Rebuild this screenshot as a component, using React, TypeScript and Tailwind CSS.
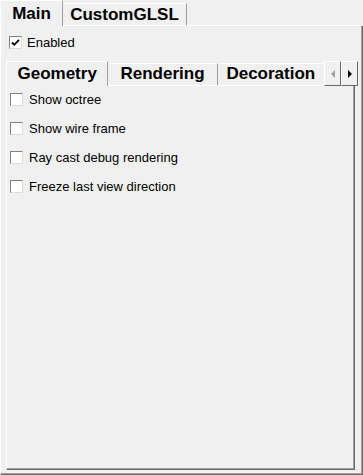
import { useState } from 'react';

const font = { fontFamily: '"Liberation Sans", Arial, sans-serif' };

const Check = ({ checked, onClick }: { checked: boolean; onClick: () => void }) => (
  <span
    onClick={onClick}
    className="flex h-[13px] w-[13px] shrink-0 items-center justify-center border border-t-[#808080] border-l-[#808080] border-r-[#dcdcdc] border-b-[#dcdcdc] bg-white"
  >
    {checked && (
      <svg width="9" height="9" viewBox="0 0 9 9">
        <path d="M1 4.5 L3.3 6.8 L8 1.8" stroke="#000" strokeWidth="1.8" fill="none" />
      </svg>
    )}
  </span>
);

const App = () => {
  const [enabled, setEnabled] = useState(true);
  const [opts, setOpts] = useState([false, false, false, false]);
  const labels = ['Show octree', 'Show wire frame', 'Ray cast debug rendering', 'Freeze last view direction'];

  return (
    <div className="flex h-[475px] w-[363px] flex-col bg-[#f0f0f0] text-black" style={font}>
      {/* outer tabs */}
      <div className="flex h-[26px] items-end">
        <div className="flex h-[26px] w-[63px] items-center justify-center border-l border-t border-white border-r border-r-[#a0a0a0] text-[17px] font-bold">
          Main
        </div>
        <div className="flex h-[23px] w-[124px] items-center justify-center border-t border-white border-r border-r-[#a0a0a0] border-b text-[17px] font-bold">
          CustomGLSL
        </div>
        <div className="h-[1px] flex-1 bg-white" />
      </div>

      {/* outer panel */}
      <div className="flex flex-1 flex-col border-l border-white border-r border-b border-r-[#696969] border-b-[#696969]">
        <div className="flex flex-1 flex-col border-r border-b border-r-[#a0a0a0] border-b-[#a0a0a0] pb-[3px] pl-[5px] pr-[3px]">
          <label className="mt-[10px] ml-[3px] flex h-[13px] items-center gap-[5px] text-[13px]">
            <Check checked={enabled} onClick={() => setEnabled(!enabled)} />
            Enabled
          </label>

          {/* inner tabs */}
          <div className="mt-[12px] flex h-[25px] items-end">
            <div className="flex h-[25px] w-[103px] items-center justify-center border-l border-t border-white border-r border-r-[#a0a0a0] pb-[1px] text-[17px] font-bold">
              Geometry
            </div>
            <div className="flex h-[23px] w-[110px] items-center justify-center border-t border-b border-white border-r border-r-[#a0a0a0] pb-[1px] text-[17px] font-bold">
              Rendering
            </div>
            <div className="flex h-[23px] w-[107px] items-center justify-center border-t border-b border-white pb-[1px] text-[17px] font-bold">
              Decoration
            </div>
            <div className="flex h-[25px]">
              <div className="flex w-[17px] items-center justify-center border-l border-t border-white border-r border-b border-r-[#696969] border-b-[#696969]">
                <svg width="4" height="8" viewBox="0 0 4 8">
                  <path d="M4 0 L0 4 L4 8 Z" fill="#a0a0a0" />
                </svg>
              </div>
              <div className="flex w-[17px] items-center justify-center border-l border-t border-white border-r border-b border-r-[#696969] border-b-[#696969]">
                <svg width="4" height="8" viewBox="0 0 4 8">
                  <path d="M0 0 L4 4 L0 8 Z" fill="#000" />
                </svg>
              </div>
            </div>
          </div>

          {/* inner panel */}
          <div className="mr-[3px] flex flex-1 flex-col border-l border-white border-r border-b border-r-[#696969] border-b-[#696969]">
            <div className="flex flex-1 flex-col gap-[16px] border-r border-b border-r-[#a0a0a0] border-b-[#a0a0a0] pt-[7px] pl-[3px]">
              {labels.map((l, i) => (
                <label key={l} className="flex h-[13px] items-center gap-[6px] text-[13px]">
                  <Check
                    checked={opts[i]}
                    onClick={() => setOpts(opts.map((o, j) => (j === i ? !o : o)))}
                  />
                  {l}
                </label>
              ))}
            </div>
          </div>
        </div>
      </div>
    </div>
  );
};

export default App;
